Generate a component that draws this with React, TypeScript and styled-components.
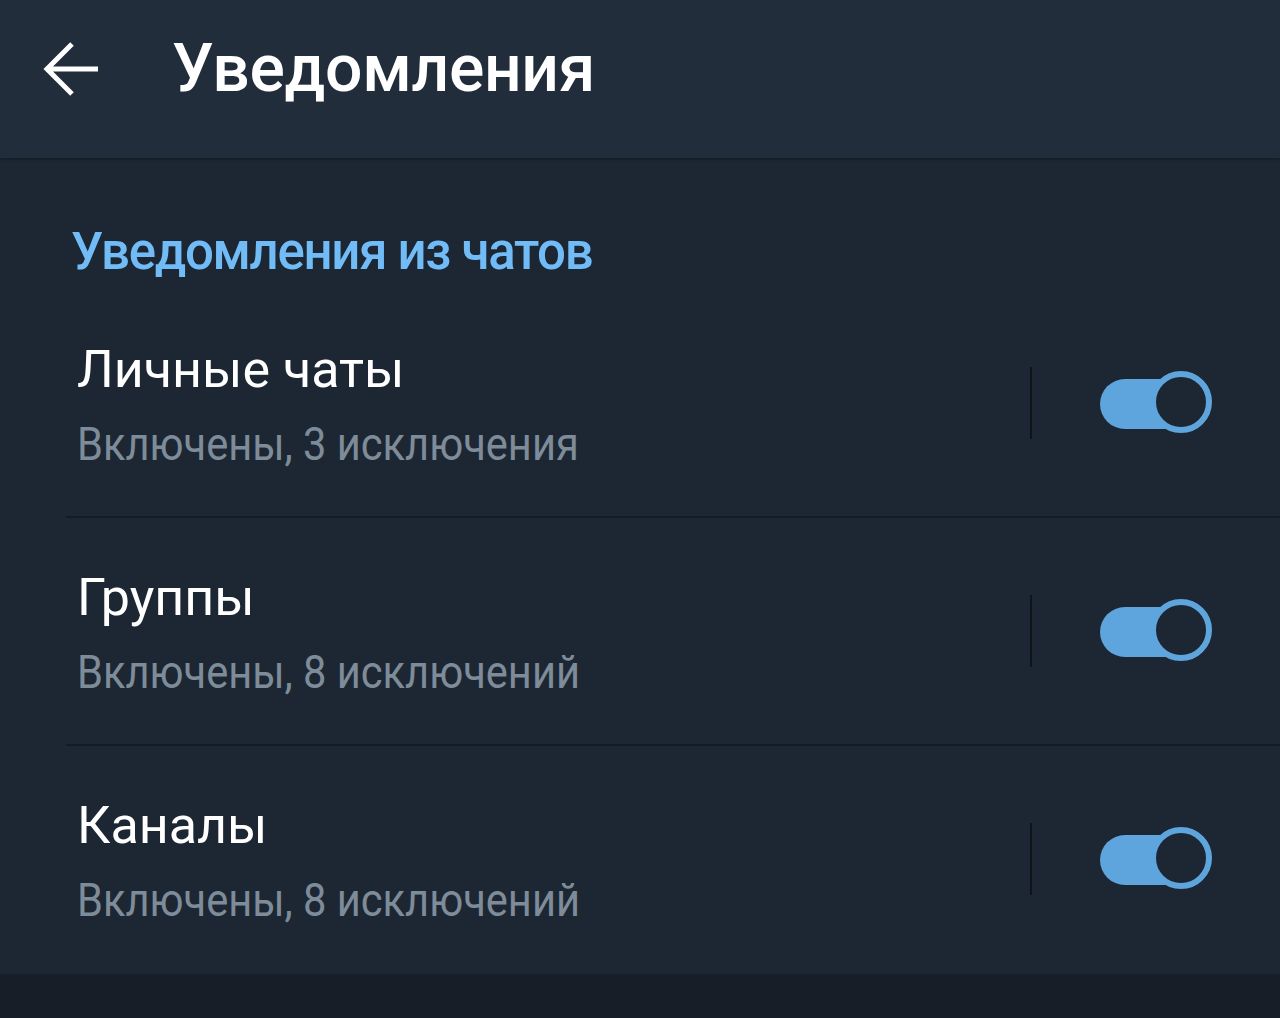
import React, { useState } from "react";
import styled, { createGlobalStyle } from "styled-components";

const GlobalStyle = createGlobalStyle`
  html, body {
    margin: 0;
    padding: 0;
    background: #171e27;
  }
  body {
    font-family: Roboto, "Noto Sans", sans-serif;
  }
`;

const Page = styled.div`
  width: 1280px;
  height: 1018px;
  display: flex;
  flex-direction: column;
  background: #171e27;
  overflow: hidden;
`;

const Header = styled.header`
  height: 158px;
  box-sizing: border-box;
  padding: 0 0 20px 42px;
  display: flex;
  align-items: center;
  gap: 72px;
  background: #212d3b;
  box-shadow: 0 2px 3px rgba(0, 0, 0, 0.25);
  position: relative;
  z-index: 1;
`;

const BackButton = styled.button`
  width: 58px;
  height: 58px;
  padding: 0;
  border: none;
  background: none;
  display: flex;
  align-items: center;
  justify-content: center;
  cursor: pointer;
`;

const Title = styled.h1`
  margin: 0;
  font-size: 66px;
  font-weight: 500;
  color: #ffffff;
  line-height: 1;
  letter-spacing: -0.3px;
`;

const Content = styled.main`
  background: #1d2733;
  padding-top: 64px;
`;

const SectionTitle = styled.h2`
  margin: 0 0 8px;
  padding-left: 71px;
  font-size: 51px;
  font-weight: 500;
  line-height: 60px;
  letter-spacing: -1.3px;
  color: #71bcf6;
`;

const List = styled.ul`
  list-style: none;
  margin: 0;
  padding: 0;
`;

const Row = styled.li<{ $last?: boolean }>`
  height: 228px;
  box-sizing: border-box;
  margin-left: 66px;
  padding: 0 68px 0 11px;
  display: flex;
  align-items: center;
  border-bottom: 2px solid ${({ $last }) => ($last ? "transparent" : "#141b23")};
`;

const TextBlock = styled.div`
  flex: 1;
  padding-top: 8px;
  display: flex;
  flex-direction: column;
`;

const RowTitle = styled.div`
  font-size: 52px;
  line-height: 74px;
  color: #ffffff;
`;

/* the subtitle face in the screenshot is a narrow cut of Roboto */
const RowSubtitle = styled.div`
  font-size: 46px;
  line-height: 74px;
  color: #7e8c99;
  white-space: nowrap;
  transform: scaleX(0.905);
  transform-origin: left center;
`;

const Divider = styled.div`
  width: 2px;
  height: 72px;
  background: #0f141a;
  margin-right: 68px;
`;

const Toggle = styled.button<{ $on: boolean }>`
  position: relative;
  width: 112px;
  height: 64px;
  padding: 0;
  border: none;
  background: none;
  cursor: pointer;
  &::before {
    content: "";
    position: absolute;
    left: 0;
    top: 8px;
    width: 96px;
    height: 50px;
    border-radius: 25px;
    background: ${({ $on }) => ($on ? "#5fa5dd" : "#4b5866")};
  }
  &::after {
    content: "";
    position: absolute;
    top: 0;
    left: ${({ $on }) => ($on ? "50px" : "0")};
    width: 62px;
    height: 62px;
    box-sizing: border-box;
    border-radius: 50%;
    border: 6px solid ${({ $on }) => ($on ? "#5fa5dd" : "#4b5866")};
    background: #1d2733;
  }
`;

const Bottom = styled.div`
  flex: 1;
  background: #171e27;
`;

const rows = [
  { title: "Личные чаты", subtitle: "Включены, 3 исключения" },
  { title: "Группы", subtitle: "Включены, 8 исключений" },
  { title: "Каналы", subtitle: "Включены, 8 исключений" },
];

export default function App() {
  const [state, setState] = useState([true, true, true]);
  return (
    <Page>
      <GlobalStyle />
      <Header>
        <BackButton aria-label="Назад">
          <svg width="56" height="54" viewBox="0 0 56 54" fill="none">
            <path
              d="M55 27H5M29 2L4 27l25 25"
              stroke="#fff"
              strokeWidth="5"
              strokeLinecap="butt"
              strokeLinejoin="miter"
            />
          </svg>
        </BackButton>
        <Title>Уведомления</Title>
      </Header>
      <Content>
        <SectionTitle>Уведомления из чатов</SectionTitle>
        <List>
          {rows.map((r, i) => (
            <Row key={r.title} $last={i === rows.length - 1}>
              <TextBlock>
                <RowTitle>{r.title}</RowTitle>
                <RowSubtitle>{r.subtitle}</RowSubtitle>
              </TextBlock>
              <Divider />
              <Toggle
                $on={state[i]}
                onClick={() =>
                  setState((s) => s.map((v, j) => (j === i ? !v : v)))
                }
              />
            </Row>
          ))}
        </List>
      </Content>
      <Bottom />
    </Page>
  );
}
